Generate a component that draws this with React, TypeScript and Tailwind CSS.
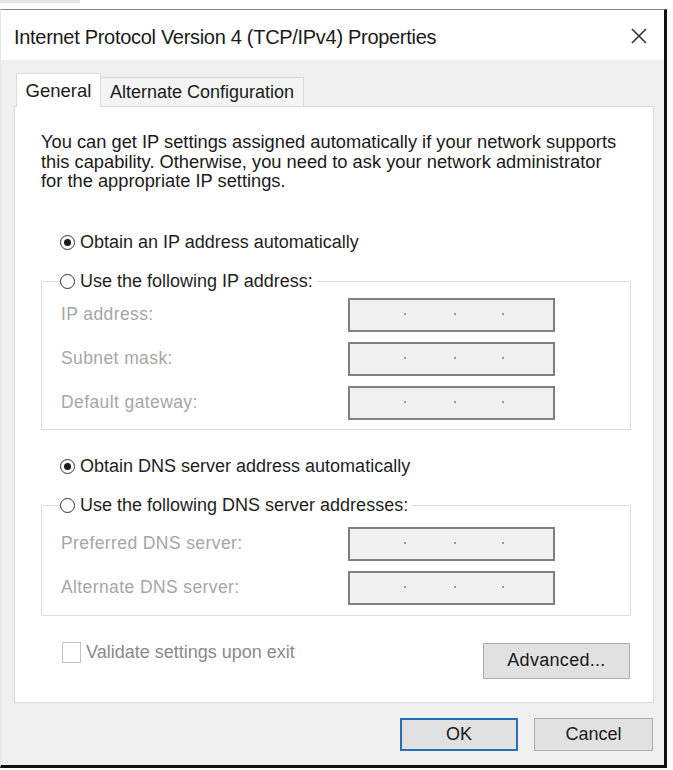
import React from "react";

const font = { fontFamily: '"Liberation Sans", Arial, sans-serif' };

function Radio({ checked }: { checked?: boolean }) {
  return (
    <span className="flex h-[15px] w-[15px] shrink-0 items-center justify-center rounded-full border border-[#333333] bg-white">
      {checked ? <span className="h-[7px] w-[7px] rounded-full bg-[#1a1a1a]" /> : null}
    </span>
  );
}

function IpBox() {
  return (
    <div className="relative h-[34px] w-[207px] border-2 border-[#808080] bg-[#f0f0f0]">
      <span className="absolute left-[54px] top-[13px] h-[2px] w-[2px] bg-[#9a9a9a]" />
      <span className="absolute left-[104px] top-[13px] h-[2px] w-[2px] bg-[#9a9a9a]" />
      <span className="absolute left-[152px] top-[13px] h-[2px] w-[2px] bg-[#9a9a9a]" />
    </div>
  );
}

function FieldRow({ label }: { label: string }) {
  return (
    <div className="flex h-[34px] items-center">
      <span className="w-[287px] text-[17.5px] tracking-[0.4px] text-[#a6a6a6]">{label}</span>
      <IpBox />
    </div>
  );
}

export default function App() {
  return (
    <div className="h-[770px] w-[673px] overflow-hidden bg-white text-[#1e1e1e]" style={font}>
      <div className="h-[9px] w-full bg-white">
        <div className="h-[3px] w-[80px] bg-[#e4e4e4]" />
      </div>
      <div className="flex h-[759px] w-[667px] flex-col border-b-[3px] border-r-[3px] border-t border-l border-b-[#111111] border-r-[#111111] border-t-[#8a8a8a] border-l-[#e6e6e6]">
        {/* Title bar */}
        <div className="flex h-[50px] shrink-0 items-center justify-between bg-white pl-[13px] pr-[16px] pt-[4px]">
          <span className="text-[20px] tracking-[-0.3px] text-[#1a1a1a]">
            Internet Protocol Version 4 (TCP/IPv4) Properties
          </span>
          <svg width="18" height="18" viewBox="0 0 18 18" className="-mt-[3px]">
            <path d="M2 2 L16 16 M16 2 L2 16" stroke="#333333" strokeWidth="1.6" fill="none" />
          </svg>
        </div>
        {/* Body */}
        <div className="flex flex-1 flex-col bg-[#f0f0f0]">
          <div className="flex flex-col px-[13px] pt-[13px]">
            {/* Tabs */}
            <div className="relative z-10 flex items-end pl-[2px]">
              <div className="flex h-[34px] w-[85px] items-center justify-center border border-b-0 border-[#d9d9d9] bg-white text-[18.5px] text-[#1a1a1a]">
                General
              </div>
              <div className="mb-[1px] flex h-[29px] w-[203px] items-center justify-center border border-b-0 border-l-0 border-[#d9d9d9] bg-[#f4f4f4] text-[18px] text-[#1a1a1a]">
                Alternate Configuration
              </div>
            </div>
            {/* Panel */}
            <div className="-mt-[1px] flex h-[597px] w-[640px] flex-col border border-[#d9d9d9] bg-white pl-[26px] pr-[22px] pt-[25px]">
              <p className="whitespace-nowrap text-[18.3px] leading-[19.5px] tracking-[0px] text-[#1a1a1a]">
                You can get IP settings assigned automatically if your network supports
                <br />
                this capability. Otherwise, you need to ask your network administrator
                <br />
                for the appropriate IP settings.
              </p>
              <div className="ml-[19px] mt-[41px] flex h-[22px] items-center gap-[5px] text-[18px]">
                <Radio checked />
                <span>Obtain an IP address automatically</span>
              </div>
              <fieldset className="mt-[17px] border border-[#dcdcdc] px-[19px] pb-[9px] pt-[5px]">
                <legend className="-ml-[1px] flex h-[22px] items-center gap-[5px] bg-white pr-[4px] text-[18px]">
                  <Radio />
                  <span>Use the following IP address:</span>
                </legend>
                <div className="flex flex-col gap-[10px]">
                  <FieldRow label="IP address:" />
                  <FieldRow label="Subnet mask:" />
                  <FieldRow label="Default gateway:" />
                </div>
              </fieldset>
              <div className="ml-[19px] mt-[26px] flex h-[22px] items-center gap-[5px] text-[18px]">
                <Radio checked />
                <span>Obtain DNS server address automatically</span>
              </div>
              <fieldset className="mt-[17px] border border-[#dcdcdc] px-[19px] pb-[10px] pt-[10px]">
                <legend className="-ml-[1px] flex h-[22px] items-center gap-[5px] bg-white pr-[4px] text-[18px]">
                  <Radio />
                  <span>Use the following DNS server addresses:</span>
                </legend>
                <div className="flex flex-col gap-[10px]">
                  <FieldRow label="Preferred DNS server:" />
                  <FieldRow label="Alternate DNS server:" />
                </div>
              </fieldset>
              <div className="mt-[23px] flex items-start justify-between">
                <div className="ml-[21px] flex items-center gap-[5px]">
                  <span className="h-[21px] w-[19px] border border-[#c4c4c4] bg-white" />
                  <span className="text-[18px] text-[#8a8a8a]">Validate settings upon exit</span>
                </div>
                <button className="mr-[1px] mt-[4px] h-[36px] w-[147px] border border-[#adadad] bg-[#e1e1e1] text-[18px] tracking-[0.3px] text-[#1a1a1a]">
                  Advanced...
                </button>
              </div>
            </div>
          </div>
          {/* Footer */}
          <div className="flex flex-1 items-center justify-end gap-[16px] pr-[11px]">
            <button className="h-[33px] w-[118px] border-2 border-[#2a6cb8] bg-[#e1e1e1] text-[18px] text-[#1a1a1a]">
              OK
            </button>
            <button className="h-[33px] w-[119px] border border-[#adadad] bg-[#e1e1e1] text-[18px] text-[#1a1a1a]">
              Cancel
            </button>
          </div>
        </div>
      </div>
    </div>
  );
}
